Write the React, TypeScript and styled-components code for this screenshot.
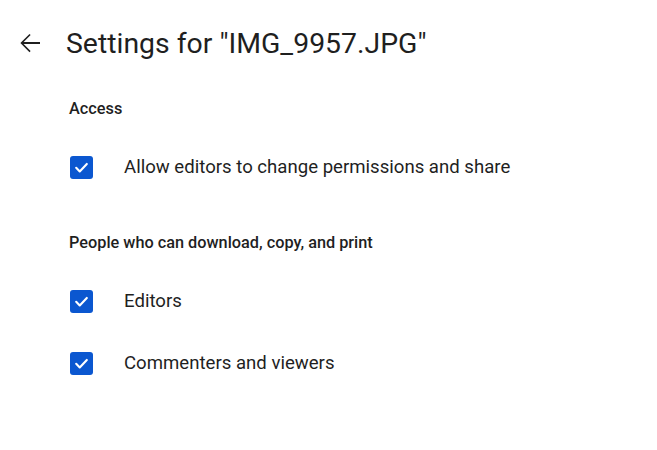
import React from "react";
import styled, { createGlobalStyle } from "styled-components";

const GlobalStyle = createGlobalStyle`
  html, body {
    margin: 0;
    padding: 0;
    background: #ffffff;
  }
  body {
    font-family: Roboto, "Noto Sans", Arial, sans-serif;
    color: #1f1f1f;
  }
`;

const Page = styled.div`
  width: 657px;
  height: 450px;
  box-sizing: border-box;
  padding-top: 24px;
`;

const Header = styled.div`
  display: flex;
  align-items: center;
  height: 38px;
  padding-left: 14px;
`;

const BackButton = styled.button`
  display: flex;
  align-items: center;
  justify-content: center;
  width: 32px;
  height: 32px;
  padding: 0;
  margin-right: 20px;
  border: none;
  background: none;
  color: #1f1f1f;
  cursor: pointer;
`;

const Title = styled.h1`
  margin: 0;
  font-size: 28.4px;
  font-weight: 400;
  letter-spacing: 0;
  color: #1f1f1f;
`;

const Content = styled.div`
  padding-left: 69px;
`;

const SectionLabel = styled.div<{ $top: number }>`
  margin-top: ${(p) => p.$top}px;
  font-size: 16.3px;
  font-weight: 500;
  line-height: 20px;
  color: #1f1f1f;
`;

const Row = styled.label<{ $top: number }>`
  display: flex;
  align-items: center;
  height: 24px;
  margin-top: ${(p) => p.$top}px;
  cursor: pointer;
`;

const Box = styled.span`
  display: flex;
  align-items: center;
  justify-content: center;
  width: 23px;
  height: 23px;
  margin-left: 1px;
  border-radius: 3px;
  background: #0b57d0;
  margin-right: 31px;
  flex-shrink: 0;
`;

const RowText = styled.span`
  font-size: 18.6px;
  color: #1f1f1f;
`;

const Check = () => (
  <Box>
    <svg width="17" height="17" viewBox="0 0 24 24" fill="none">
      <path
        d="M4.5 12.5l5 5L19.5 7"
        stroke="#ffffff"
        strokeWidth="3"
        strokeLinecap="round"
        strokeLinejoin="round"
      />
    </svg>
  </Box>
);

export default function App() {
  return (
    <>
      <GlobalStyle />
      <Page>
        <Header>
          <BackButton aria-label="Back">
            <svg width="30" height="30" viewBox="0 0 24 24">
              <path
                d="M20 11.2H6.9l5.6-5.6L11.6 4.7 4.3 12l7.3 7.3.9-.9-5.6-5.6H20v-1.6z"
                fill="#1f1f1f"
              />
            </svg>
          </BackButton>
          <Title>Settings for "IMG_9957.JPG"</Title>
        </Header>
        <Content>
          <SectionLabel $top={37}>Access</SectionLabel>
          <Row $top={36}>
            <Check />
            <RowText>Allow editors to change permissions and share</RowText>
          </Row>
          <SectionLabel $top={54}>People who can download, copy, and print</SectionLabel>
          <Row $top={36}>
            <Check />
            <RowText>Editors</RowText>
          </Row>
          <Row $top={38}>
            <Check />
            <RowText>Commenters and viewers</RowText>
          </Row>
        </Content>
      </Page>
    </>
  );
}
